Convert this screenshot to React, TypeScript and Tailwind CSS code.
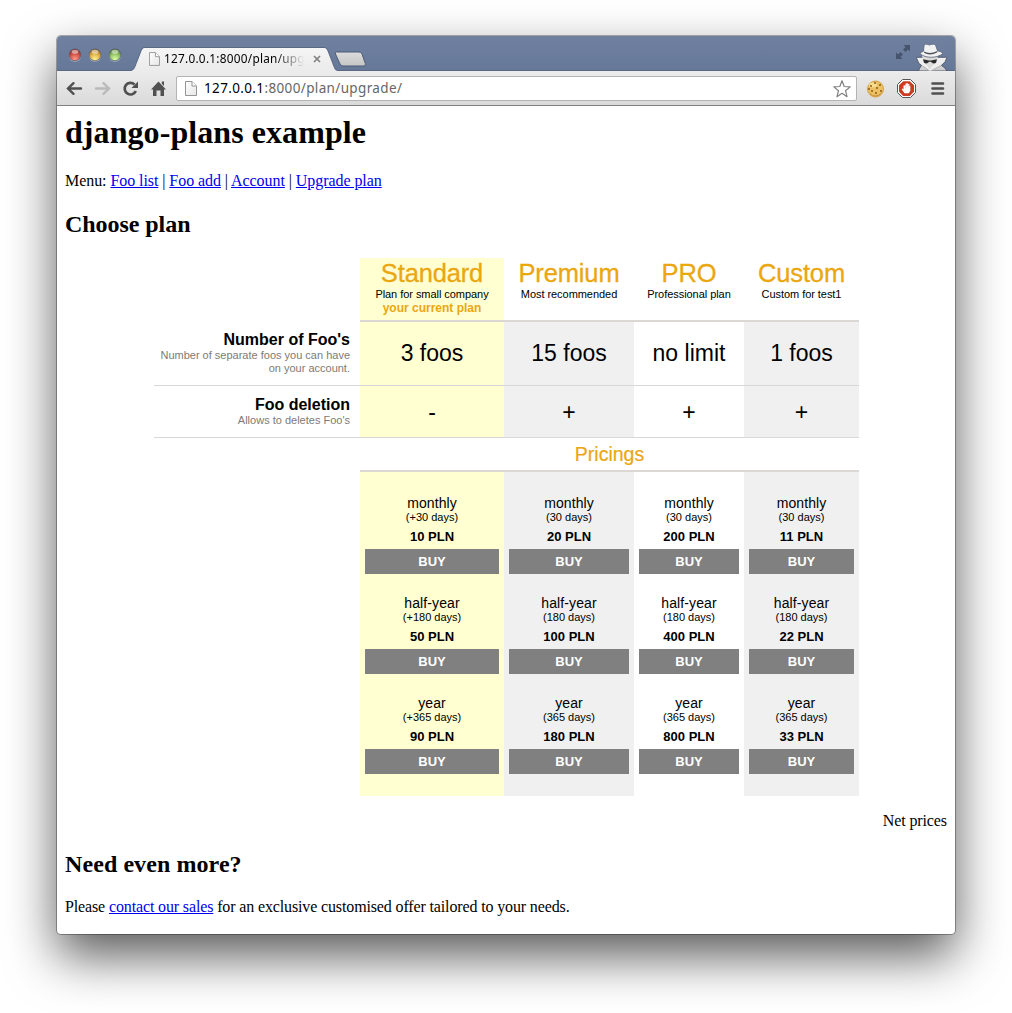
import React from "react";

const plans = [
  { name: "Standard", desc: "Plan for small company", foos: "3 foos", del: "-", bg: "bg-[#ffffd2]", head: "bg-[#ffffd2]", plus: "+", prices: ["10 PLN", "50 PLN", "90 PLN"] },
  { name: "Premium", desc: "Most recommended", foos: "15 foos", del: "+", bg: "bg-[#f0f0f0]", head: "bg-white", plus: "", prices: ["20 PLN", "100 PLN", "180 PLN"] },
  { name: "PRO", desc: "Professional plan", foos: "no limit", del: "+", bg: "bg-white", head: "bg-white", plus: "", prices: ["200 PLN", "400 PLN", "800 PLN"] },
  { name: "Custom", desc: "Custom for test1", foos: "1 foos", del: "+", bg: "bg-[#f0f0f0]", head: "bg-white", plus: "", prices: ["11 PLN", "22 PLN", "33 PLN"] },
];

const periods = [
  { label: "monthly", days: 30 },
  { label: "half-year", days: 180 },
  { label: "year", days: 365 },
];

const cols = "grid grid-cols-[206px_144px_130px_110px_115px]";

function PageIcon({ className }: { className: string }) {
  return (
    <svg className={className} viewBox="0 0 12 15">
      <defs>
        <linearGradient id="page" x1="0" y1="0" x2="1" y2="1">
          <stop offset="0" stopColor="#fff" />
          <stop offset="1" stopColor="#e6e6e6" />
        </linearGradient>
      </defs>
      <path d="M.5 .5H7L11.500 5V14.500H.5Z" fill="url(#page)" stroke="#959595" />
      <path d="M7 .5V5H11.500" fill="#fff" stroke="#959595" />
    </svg>
  );
}

function TitleBar() {
  return (
    <div className="relative h-[35px] rounded-t-[4px] bg-linear-to-b from-[#7081a0] to-[#667898]">
      <svg className="absolute inset-0" width="898" height="35" viewBox="0 0 898 35">
        <defs>
          <radialGradient id="red" cx=".5" cy=".85" r=".8"><stop offset="0" stopColor="#ff9a8a" /><stop offset=".55" stopColor="#d25247" /><stop offset="1" stopColor="#8c2822" /></radialGradient>
          <radialGradient id="yellow" cx=".5" cy=".85" r=".8"><stop offset="0" stopColor="#fff294" /><stop offset=".55" stopColor="#e2b245" /><stop offset="1" stopColor="#94621c" /></radialGradient>
          <radialGradient id="green" cx=".5" cy=".85" r=".8"><stop offset="0" stopColor="#dcffa6" /><stop offset=".55" stopColor="#93c263" /><stop offset="1" stopColor="#4b7a2a" /></radialGradient>
          <linearGradient id="tab" x1="0" y1="0" x2="0" y2="1"><stop offset="0" stopColor="#f5f5f5" /><stop offset="1" stopColor="#ebebeb" /></linearGradient>
          <linearGradient id="newtab" x1="0" y1="0" x2="0" y2="1"><stop offset="0" stopColor="#dcdcdc" /><stop offset="1" stopColor="#c6c6c6" /></linearGradient>
          <linearGradient id="spy" x1="0" y1="0" x2="0" y2="1"><stop offset="0" stopColor="#f4f4f4" /><stop offset="1" stopColor="#c8c8c8" /></linearGradient>
        </defs>
        {[["url(#red)", 18], ["url(#yellow)", 38], ["url(#green)", 58]].map(([fill, x]) => (
          <g key={x}>
            <circle cx={x} cy="19.800" r="6.200" fill="#93a1ba" />
            <circle cx={x} cy="18.800" r="5.900" fill={fill as string} stroke="#4b4a55" strokeOpacity=".6" strokeWidth=".8" />
            <ellipse cx={x} cy="15.800" rx="3.400" ry="2" fill="#fff" opacity=".5" />
          </g>
        ))}
        <path d="M0 34.500H73C76 34.500 77 33 78 30.500L84 15C85 12 86 11.500 88.500 11.500H266C269 11.500 270 12 271 15L277 30.500C278 33.500 279 34.500 282 34.500H898" fill="none" stroke="#5a6882" />
        <path d="M74 35C76 34.500 77.500 33 78.500 30.500L84.500 15C85.500 12.500 86.500 12 88.500 12H266C268.500 12 269.500 12.500 270.500 15L276.500 30.500C277.500 33.500 279 35 281 35Z" fill="url(#tab)" />
        <path d="M279.500 16H302Q304 16 305 18L308.300 27.500Q309 30 307 30H286Q284 30 283 28L278.500 18Q278 16 279.500 16Z" fill="url(#newtab)" stroke="#4f5d76" />
        <path d="M257 20L263 26M263 20L257 26" stroke="#808080" strokeWidth="1.700" />
        <g fill="#46546d">
          <path d="M846.500 9H853V15.500L850.800 13.500L848.500 16L846 13.500L848.600 11.200Z" />
          <path d="M845.500 23H839V16.500L841.200 18.500L843.500 16L846 18.500L843.400 20.800Z" />
        </g>
        <path d="M861.500 35L862.500 32.500L864.500 29.500L861.500 27L859.500 21.300L866 21.300H880L889.800 21.300L888.300 25.500L884.500 29.500L888 32L889.800 35Z" fill="url(#spy)" stroke="#4c5365" strokeWidth=".9" />
        <path d="M865 19H880.500L880 27L873 32.500L866 27Z" fill="#d8d8d8" />
        <path d="M860 22L865.500 23L872.800 33L880.500 23L889.300 21.800L886 27L873 35L863 27Z" fill="#efefef" />
        <path d="M866 21L873 24L880.500 21L879.500 27L873 31L867 27Z" fill="#dddddd" />
        <path d="M863 17.700Q864 16 866.500 15.200L867 9.800C868 7.300 870 8.300 872.500 9C875 8.300 877.500 7.300 878.800 9.800L880.500 14.800Q884.500 15.500 886 17.500C880 22.500 868.500 22.500 863 17.700Z" fill="#f2f2f2" stroke="#5b6273" strokeWidth=".8" />
        <path d="M867 15.500Q873 18.500 880.300 15L880.500 16.200Q873 20.300 867.300 17Z" fill="#4c5059" />
        <path d="M866 23.300L872 24.500H874L880 23.300L879 26.700Q876 28.500 874 25.800H872Q870 28.500 867 26.700Z" fill="#2c2c2c" />
        <path d="M865.500 30L872 34.500M884 30L875 34.500" stroke="#b6b6b6" fill="none" />
      </svg>
      <PageIcon className="absolute left-[92px] top-[16px] h-[14px] w-[11px]" />
      <span className="absolute left-[107px] top-[14px] w-[146px] whitespace-nowrap bg-linear-to-r from-black from-76% to-transparent to-96% bg-clip-text font-['Noto_Sans'] text-[11.8px] leading-[17px] tracking-[0.26px] text-transparent">
        127.0.0.1:8000/plan/upgr
      </span>
    </div>
  );
}

function Toolbar() {
  return (
    <div className="flex h-[35px] items-center border-b border-[#808080] bg-linear-to-b from-[#ececec] to-[#dadada]">
      <svg width="119" height="34" viewBox="0 0 119 34" fill="none" stroke="#505050" strokeWidth="2.400" strokeLinecap="round">
        <path d="M24 17.500H12M16.500 12.200L11 17.500L16.500 22.800" />
        <path d="M39 17.500H51M46.500 12.200L52 17.500L46.500 22.800" stroke="#bababa" />
        <path d="M77.500 13.500A5.800 5.800 0 1 0 78.800 20" strokeLinecap="butt" strokeWidth="2.700" />
        <path d="M81 10.500V17H74.500Z" fill="#505050" stroke="none" />
        <path d="M94 18.500L101.500 10.500L109 18.500H107V25H103.500V19.500H99.500V25H96V18.500ZM104.800 10.500H107V15L104.800 12.700Z" fill="#505050" stroke="none" />
      </svg>
      <div className="flex h-[25px] w-[681px] items-center rounded-[2px] border border-[#b4b4b4] bg-white pl-[8px] pr-[5px]">
        <PageIcon className="h-[15px] w-[12px]" />
        <span className="ml-[7px] flex-1 whitespace-nowrap font-['Noto_Sans'] text-[13.5px] leading-[20px] tracking-[0.36px] text-[#666]">
          <span className="text-black">127.0.0.1</span>:8000/plan/upgrade/
        </span>
        <svg width="18" height="18" viewBox="0 0 18 18" className="mt-px">
          <path d="M9 .8L11.200 6.500L17.200 6.900L12.500 10.700L14 16.700L9 13.300L4 16.700L5.500 10.700L.8 6.900L6.800 6.500Z" fill="#fff" stroke="#808080" strokeWidth="1.200" strokeLinejoin="round" />
        </svg>
      </div>
      <svg width="98" height="34" viewBox="0 0 98 34">
        <circle cx="18.500" cy="18" r="8" fill="#ecc164" stroke="#d6a347" />
        <path d="M12 21Q18 28 25 21Q22 26 18 25.500Q14 25 12 21" fill="#c98f38" />
        <ellipse cx="16" cy="14" rx="4" ry="2.500" fill="#f8dc92" />
        <g fill="#805016">
          {[[14, 15], [18, 12], [23, 14], [20, 17], [15, 20], [19, 22], [24, 20], [12, 18]].map(([x, y]) => <circle key={`${x}-${y}`} cx={x} cy={y} r=".9" />)}
        </g>
        <path d="M45.500 8.500H53.500L58.500 13.500V21.500L53.500 26.500H45.500L40.500 21.500V13.500Z" fill="#fff" stroke="#555" />
        <path d="M46.200 10.200H52.800L57 14.300V20.700L52.800 24.900H46.200L42 20.700V14.300Z" fill="#cc3c22" />
        <path d="M46.500 14.500V18.500L45.300 17.500L44.700 18.300L47.500 22.300H51.800L53.300 19.800V14.800H52.300V13H51.100V12.200H49.800V12.600H48.500V14.200Z" fill="#fff" />
        <path d="M50 12.500V16.500M51.600 13V16.500M48.300 14V17" stroke="#e8a99c" strokeWidth=".4" />
        <path d="M75.500 12.500H86M75.500 17.500H86M75.500 22.500H86" stroke="#505050" strokeWidth="2.600" strokeLinecap="round" />
      </svg>
    </div>
  );
}

function PlanTable() {
  return (
    <div className="ml-[97px] mt-[20px] w-[705px] font-['Liberation_Sans'] text-black">
      <div className={cols}>
        <div />
        {plans.map((p, i) => (
          <div key={p.name} className={`${p.head} h-[64px] border-b-2 border-[#dbd8d4] text-center`}>
            <div className="h-[30px] text-[25.5px] leading-[30px] tracking-[-0.15px] text-[#eaa710] [-webkit-text-stroke:0.3px_#eaa710]">{p.name}</div>
            <div className="text-[11px] leading-[13px] tracking-[-0.05px]">{p.desc}</div>
            {i === 0 && <div className="mt-px text-[12px] font-bold leading-[13px] text-[#eaa710]">your current plan</div>}
          </div>
        ))}
      </div>
      <div className={`${cols} h-[64px] border-b border-[#d8d8d8]`}>
        <div className="pr-[10px] pt-[8px] text-right">
          <div className="text-[16px] font-bold leading-[19px]">Number of Foo's</div>
          <div className="text-[11px] leading-[13px] text-[#7e7a75]">Number of separate foos you can have<br />on your account.</div>
        </div>
        {plans.map((p) => <div key={p.name} className={`${p.bg} text-center text-[23px] leading-[63px]`}>{p.foos}</div>)}
      </div>
      <div className={`${cols} h-[52px] border-b border-[#d8d8d8]`}>
        <div className="pr-[10px] pt-[9px] text-right">
          <div className="text-[16px] font-bold leading-[19px]">Foo deletion</div>
          <div className="text-[11px] leading-[13px] text-[#7e7a75]">Allows to deletes Foo's</div>
        </div>
        {plans.map((p) => <div key={p.name} className={`${p.bg} pt-px text-center text-[23px] leading-[50px]`}>{p.del}</div>)}
      </div>
      <div className="ml-[206px] h-[34px] border-b-2 border-[#dbd8d4] text-center text-[19.500px] leading-[33px] text-[#eaa710] [-webkit-text-stroke:0.2px_#eaa710]">Pricings</div>
      <div className={cols}>
        <div />
        {plans.map((p) => (
          <div key={p.name} className={`${p.bg} h-[324px] px-[5px] pt-[23px] text-center`}>
            {periods.map((t, i) => (
              <div key={t.label} className="h-[100px]">
                <div className="text-[14px] leading-[17px] tracking-[0.1px]">{t.label}</div>
                <div className="text-[11px] leading-[11px]">({p.plus}{t.days} days)</div>
                <div className="mt-[6px] text-[13px] font-bold leading-[15px]">{p.prices[i]}</div>
                <div className="mt-[5px] h-[25px] bg-[#808080] text-[13px] font-bold leading-[25px] text-white">BUY</div>
              </div>
            ))}
          </div>
        ))}
      </div>
    </div>
  );
}

function Link({ children }: { children: React.ReactNode }) {
  return <a href="#" className="text-[#0000ee] underline">{children}</a>;
}

export default function App() {
  return (
    <div className="h-[1013px] overflow-hidden bg-white pl-[57px] pt-[36px]">
      <div className="h-[898px] w-[898px] rounded-[4px] bg-white shadow-[0_0_0_1px_rgba(0,0,0,0.3),0_22px_50px_rgba(0,0,0,0.65)]">
        <TitleBar />
        <Toolbar />
        <main className="px-[8px] font-['Liberation_Serif'] text-[16px] leading-[18px] text-black">
          <h1 className="pt-[8px] text-[32px] font-bold leading-[36px] tracking-[0.07px]">django-plans example</h1>
          <p className="mt-[22px] tracking-[-0.065px]">
            Menu: <Link>Foo list</Link> | <Link>Foo add</Link> | <Link>Account</Link> | <Link>Upgrade plan</Link>
          </p>
          <h2 className="mt-[20px] text-[24px] font-bold leading-[28px] tracking-[-0.05px]">Choose plan</h2>
          <div className="-ml-[8px]"><PlanTable /></div>
          <p className="mt-[16px] text-right tracking-[-0.1px]">Net prices</p>
          <h2 className="mt-[20px] text-[24px] font-bold leading-[28px] tracking-[0.08px]">Need even more?</h2>
          <p className="mt-[20px] tracking-[-0.135px]">Please <Link>contact our sales</Link> for an exclusive customised offer tailored to your needs.</p>
        </main>
      </div>
    </div>
  );
}
